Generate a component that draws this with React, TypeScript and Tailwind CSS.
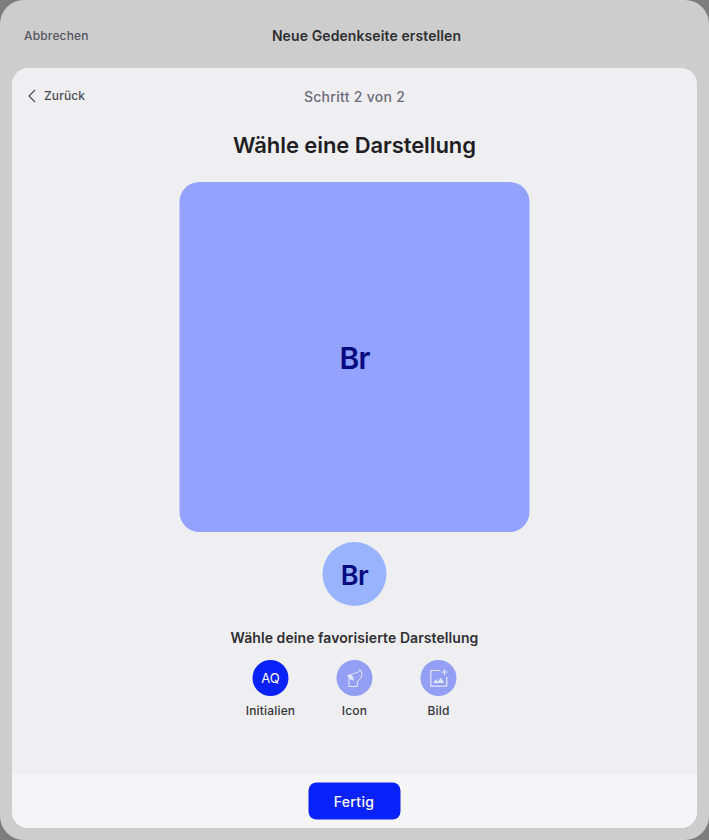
import type { ReactNode } from 'react';

function Choice({ label, active = false, children }: { label: string; active?: boolean; children: ReactNode }) {
  return (
    <button className="flex w-[84px] flex-col items-center">
      <span
        className={`flex size-9 -translate-x-[0.5px] items-center justify-center rounded-full ${
          active ? 'bg-[#0a22fa] text-white' : 'bg-[#939ff5] text-[#e3e6fd]'
        }`}
      >
        {children}
      </span>
      <span className="mt-[7px] text-[12px] font-medium leading-4 tracking-[0.18px] text-[#35353a]">{label}</span>
    </button>
  );
}

export default function App() {
  return (
    <div className="h-[840px] w-[709px] bg-[#7d7d7d] font-['Inter',sans-serif]">
      <div className="flex h-full flex-col rounded-[24px] bg-[#cdcdcd] px-3 pb-3">
        <header className="grid h-[68px] grid-cols-[1fr_auto_1fr] items-center pl-3 pr-0">
          <button className="mt-1 -mr-3 justify-self-start text-[12px] font-medium leading-4 tracking-[0.16px] text-[#55555f]">
            Abbrechen
          </button>
          <h1 className="ml-3 mt-1 text-[14px] font-semibold leading-5 tracking-[0.1px] text-[#2f2f31]">
            Neue Gedenkseite erstellen
          </h1>
        </header>

        <section className="flex flex-1 flex-col overflow-hidden rounded-[16px] bg-[#efeff2]">
          <div className="grid h-14 grid-cols-[1fr_auto_1fr] items-center px-4">
            <button className="flex items-center text-[12px] font-medium leading-4 tracking-[0.12px] text-[#4b4b55]">
              <svg width="8" height="14" viewBox="0 0 8 14" fill="none" stroke="currentColor" strokeWidth="1.2" className="mr-2">
                <path d="M7 1 1 7l6 6" />
              </svg>
              Zurück
            </button>
            <p className="mt-0.5 text-[14px] font-medium leading-5 tracking-[0.28px] text-[#6c6b7b]">Schritt 2 von 2</p>
          </div>

          <div className="flex flex-1 flex-col items-center">
            <h2 className="mt-[5px] text-[22px] font-semibold leading-8 tracking-[-0.08px] text-[#1f1f23]">
              Wähle eine Darstellung
            </h2>
            <div className="mt-[21px] flex size-[350px] -translate-x-[0.5px] items-center justify-center rounded-[20px] bg-[#93a1ff] pl-px pt-0.5 text-[30px] font-semibold tracking-[-0.9px] text-[#020c80]">
              Br
            </div>
            <div className="mt-[10px] flex size-16 -translate-x-[0.5px] items-center justify-center rounded-full bg-[#9ab3ff] pl-px pt-1 text-[27px] font-semibold tracking-[-0.4px] text-[#020c80]">
              Br
            </div>
            <h3 className="mt-[22px] text-[14px] font-semibold leading-5 tracking-[0.07px] text-[#2f2f33]">
              Wähle deine favorisierte Darstellung
            </h3>
            <div className="mt-3 flex">
              <Choice label="Initialien" active>
                <span className="pl-px pt-px text-[13px] font-normal tracking-[0.1px]">AQ</span>
              </Choice>
              <Choice label="Icon">
                <svg width="20" height="20" viewBox="0 0 20 20" fill="none" stroke="currentColor" strokeWidth="1">
                  <path d="M4.5 10v8.5h8.3v-5c2.2-1.4 4.3-3.8 4.5-6.3.1-2.3-.6-4.3-1.8-5.7-.6 2-2.2 3.2-4.5 3.5-1.6.2-3 .7-4.2 1.7" />
                  <path d="M3.2 7.3 5.6 6.5 8.1 8.2 9 12.5 7 10.9 6.3 11.7 4.8 9.6 4.1 9.9z" fill="currentColor" strokeWidth=".6" />
                </svg>
              </Choice>
              <Choice label="Bild">
                <svg width="20" height="20" viewBox="0 0 20 20" fill="none" stroke="currentColor" strokeWidth="1.2">
                  <path d="M11.5 2.5h-9.2v15.7h16V9" />
                  <path d="M16 1v6M13 4h6" />
                  <path d="m4.8 15 2.5-3.7 2 2.4 2.9-4 3.7 5.3z" fill="currentColor" stroke="none" />
                </svg>
              </Choice>
            </div>
          </div>

          <footer className="flex h-[54px] items-center justify-center bg-[#f5f5f8]">
            <button className="h-[37px] w-[92px] -translate-x-[0.5px] -translate-y-[0.5px] rounded-[8px] bg-[#0a22fa] text-[14px] font-medium tracking-[0.35px] text-white">
              Fertig
            </button>
          </footer>
        </section>
      </div>
    </div>
  );
}
